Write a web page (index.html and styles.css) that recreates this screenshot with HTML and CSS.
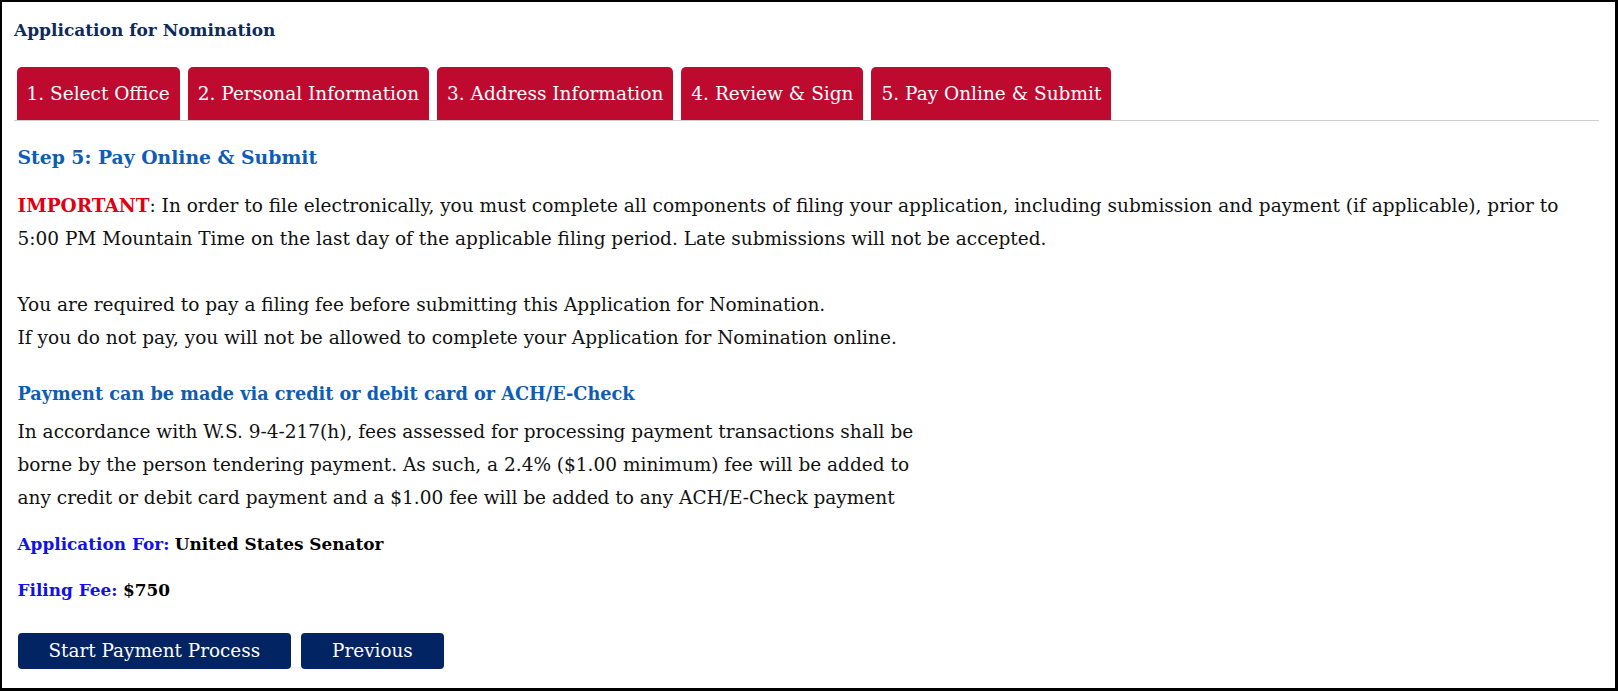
FILE: index.html
```html
<!DOCTYPE html>
<html lang="en">
<head>
<meta charset="utf-8">
<title>Application for Nomination</title>
<link rel="stylesheet" href="styles.css">
</head>
<body>
<div class="frame">
  <h1 class="title">Application for Nomination</h1>
  <nav class="tabs">
    <a class="tab">1. Select Office</a>
    <a class="tab">2. Personal Information</a>
    <a class="tab">3. Address Information</a>
    <a class="tab">4. Review &amp; Sign</a>
    <a class="tab">5. Pay Online &amp; Submit</a>
  </nav>
  <section class="content">
    <h2 class="step">Step 5: Pay Online &amp; Submit</h2>
    <p class="text"><span class="important">IMPORTANT</span>: In order to file electronically, you must complete all components of filing your application, including submission and payment (if applicable), prior to<br>5:00 PM Mountain Time on the last day of the applicable filing period. Late submissions will not be accepted.<br><br>You are required to pay a filing fee before submitting this Application for Nomination.<br>If you do not pay, you will not be allowed to complete your Application for Nomination online.</p>
    <h3 class="subhead">Payment can be made via credit or debit card or ACH/E-Check</h3>
    <p class="text">In accordance with W.S. 9-4-217(h), fees assessed for processing payment transactions shall be<br>borne by the person tendering payment. As such, a 2.4% ($1.00 minimum) fee will be added to<br>any credit or debit card payment and a $1.00 fee will be added to any ACH/E-Check payment</p>
    <p class="field"><span class="label">Application For:</span> <strong>United States Senator</strong></p>
    <p class="field"><span class="label">Filing Fee:</span> <strong>$750</strong></p>
    <div class="actions">
      <button class="btn">Start Payment Process</button>
      <button class="btn">Previous</button>
    </div>
  </section>
</div>
</body>
</html>
```
FILE: styles.css
```css
html, body {
  margin: 0;
  padding: 0;
  background: #fff;
}
body {
  font-family: "DejaVu Serif", "Liberation Serif", serif;
  color: #111;
}
.frame {
  box-sizing: border-box;
  width: 1618px;
  height: 691px;
  border-style: solid;
  border-color: #000;
  border-width: 2px 3px 3px 2px;
  padding: 16px 16px 0 12px;
}
.title {
  margin: 0;
  font-size: 17px;
  line-height: 24px;
  font-weight: bold;
  color: #0d2a5c;
}
.tabs {
  display: flex;
  gap: 8px;
  margin-top: 25px;
  padding-left: 2.5px;
  border-bottom: 1px solid #cfcfcf;
}
.tab {
  display: block;
  height: 53px;
  line-height: 53px;
  padding: 0 10px;
  background: #bf0a30;
  color: #fff;
  font-size: 18.5px;
  border-radius: 5px 5px 0 0;
}
.content {
  padding-left: 3.5px;
}
.step {
  margin: 23px 0 0;
  font-size: 18.8px;
  line-height: 26px;
  font-weight: bold;
  color: #0c5db3;
}
.text {
  margin: 19px 0 0;
  font-size: 18.5px;
  line-height: 33px;
  white-space: nowrap;
}
.important {
  color: #e0000f;
  font-weight: bold;
}
.subhead {
  margin: 28px 0 0;
  font-size: 17.7px;
  line-height: 24px;
  font-weight: bold;
  color: #0c5db3;
}
.subhead + .text {
  margin-top: 9px;
}
.field {
  margin: 13.5px 0 0;
  font-size: 16.9px;
  line-height: 33px;
}
.field strong {
  color: #000;
}
.label {
  color: #1010f0;
  font-weight: bold;
}
.actions {
  display: flex;
  gap: 10px;
  margin-top: 25.5px;
}
.btn {
  height: 36px;
  padding: 0 31px;
  border: 0;
  border-radius: 4px;
  background: #022463;
  color: #fff;
  font-family: inherit;
  font-size: 18.4px;
  cursor: pointer;
}
```
